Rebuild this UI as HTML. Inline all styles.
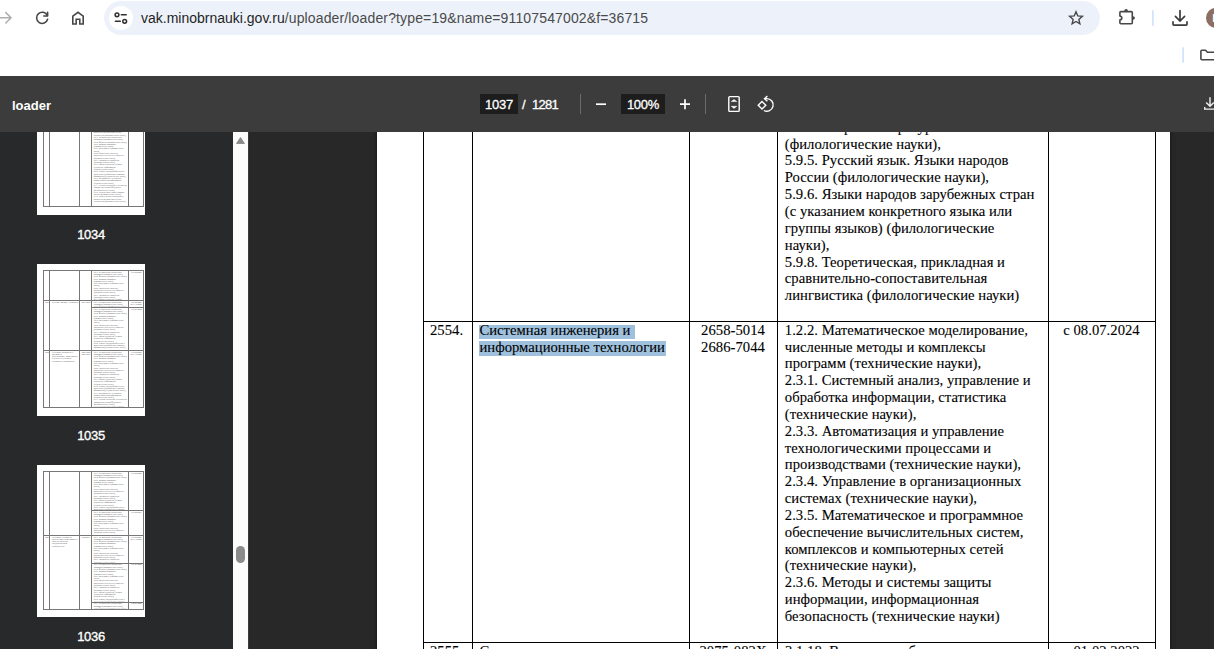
<!DOCTYPE html>
<html lang="ru">
<head>
<meta charset="utf-8">
<title>loader</title>
<style>
*{box-sizing:border-box;margin:0;padding:0}
html,body{width:1214px;height:649px;overflow:hidden;background:#fff}
body{position:relative;font-family:"Liberation Sans",sans-serif}
#chrome{position:absolute;left:0;top:0;width:1214px;height:76px;background:#fff;overflow:hidden}
#omni{position:absolute;left:104px;top:1px;width:996px;height:34px;border-radius:17px;background:#edf2fa}
#chip{position:absolute;left:5px;top:5px;width:24px;height:24px;border-radius:12px;background:#fff}
#url{position:absolute;left:37px;top:0;height:34px;line-height:34px;font-size:14px;color:#4a4a4a;white-space:nowrap;letter-spacing:.14px}
#url b{font-weight:normal;color:#1f1f1f;letter-spacing:0}
.ico{position:absolute;overflow:visible}
#tb{position:absolute;left:0;top:76px;width:1214px;height:56px;background:#3c3c3c;color:#fff}
#title{position:absolute;left:12px;top:1px;line-height:57px;font-size:13px;font-weight:bold}
.box{position:absolute;top:18px;height:20px;background:#1d1d1d;font-size:13px;line-height:22px;text-align:center;color:#fff;letter-spacing:-.25px;-webkit-text-stroke:.3px #fff}
.txt{position:absolute;top:18px;height:20px;font-size:13px;line-height:22px;color:#fff;white-space:nowrap;letter-spacing:-.25px;-webkit-text-stroke:.3px #fff}
.sep{position:absolute;top:18px;width:1px;height:20px;background:#6a6a6a}
#side{position:absolute;left:0;top:132px;width:233px;height:517px;background:#28292a;overflow:hidden}
.th{position:absolute;left:37px;width:108px;height:152px;background:#fff;overflow:hidden}
.th i{position:absolute;background:#777;display:block}
.th u{position:absolute;display:block;text-decoration:none;background:repeating-linear-gradient(180deg,#bdbdbd 0,#bdbdbd 1px,#fff 1px,#fff 2.3px)}
.lbl{position:absolute;left:37px;width:108px;text-align:center;color:#fff;font-size:13px;line-height:16px;letter-spacing:-.3px;-webkit-text-stroke:.35px #fff}
#sb{position:absolute;left:233px;top:132px;width:15px;height:517px;background:#fcfcfc}
#thumb{position:absolute;left:3px;top:414px;width:9px;height:17px;border-radius:4.5px;background:#8b8b8b}
#main{position:absolute;left:248px;top:132px;width:966px;height:517px;background:#282828;overflow:hidden;border-left:1px solid #3a3a3a}
#page{position:absolute;left:128px;top:-300px;width:793px;height:1123px;background:#fff;box-shadow:0 0 4px rgba(0,0,0,.6)}
#layer{position:absolute;left:-249px;top:-132px;width:1214px;height:649px}
#layer .v,#layer .h,#layer .hl{position:absolute}
#layer .v,#layer .h{background:#000}
.t{position:absolute;font-family:"Liberation Serif",serif;font-size:14.667px;line-height:17px;color:#000;white-space:nowrap;-webkit-text-stroke:.1px #000;letter-spacing:.03px}
.hl{background:#9fc1dd}
.pg{position:absolute;left:0;top:0;width:793px;height:1123px;transform:scale(.1362,.1354);transform-origin:0 0;font-family:"Liberation Serif",serif;font-size:14.667px;line-height:16.86px;color:#444}
.pg p{position:absolute;overflow:hidden;padding-left:8px}
</style>
</head>
<body>
<div id="side">
<div class="th" style="top:-69px">
<div class="pg">
<p style="left:408px;width:258px;top:52px;height:1001px;text-align:left">5.2.3. Региональная и отраслевая экономика (экономические науки),<br>5.2.4. Финансы (экономические науки),<br>5.2.5. Мировая экономика (экономические науки),<br>5.2.6. Менеджмент (экономические науки),<br>5.4.4. Социальная структура, социальные институты и процессы (социологические науки),<br>5.4.7. Социология управления (социологические науки),<br>5.8.1. Общая педагогика, история педагогики и образования (педагогические науки),<br>5.8.2. Теория и методика обучения и воспитания (по областям и уровням образования) (педагогические науки),<br>5.8.7. Методология и технология профессионального образования (педагогические науки),<br>5.9.1. Русская литература и литературы народов Российской Федерации (филологические науки),<br>5.9.5. Русский язык. Языки народов России (филологические науки),<br>5.9.8. Теоретическая, прикладная и сравнительно-сопоставительная лингвистика (филологические науки),<br>5.2.3. Региональная и отраслевая экономика (экономические науки),<br>5.2.4. Финансы (экономические науки),<br>5.2.5. Мировая экономика (экономические науки),<br>5.2.6. Менеджмент (экономические науки),<br>5.4.4. Социальная структура, социальные институты и процессы (социологические науки),<br>5.4.7. Социология управления (социологические науки),<br>5.8.1. Общая педагогика, история педагогики и образования (педагогические науки),<br>5.8.2. Теория и методика обучения и воспитания (по областям и уровням образования) (педагогические науки),<br>5.8.7. Методология и технология профессионального образования (педагогические науки),<br>5.9.1. Русская литература и литературы народов Российской Федерации (филологические науки),<br>5.9.5. Русский язык. Языки народов России (филологические науки),<br>5.9.8. Теоретическая, прикладная и сравнительно-сопоставительная лингвистика (филологические науки),<br></p>
</div>
<i style="left:6px;top:6px;width:1px;height:138px"></i>
<i style="left:12px;top:6px;width:1px;height:138px"></i>
<i style="left:42px;top:6px;width:1px;height:138px"></i>
<i style="left:54px;top:6px;width:1px;height:138px"></i>
<i style="left:91px;top:6px;width:1px;height:138px"></i>
<i style="left:106px;top:6px;width:1px;height:138px"></i>
<i style="left:6px;top:6px;width:101px;height:1px"></i>
<i style="left:6px;top:143px;width:101px;height:1px"></i>
</div>
<div class="lbl" style="top:95px">1034</div>
<div class="th" style="top:132px">
<div class="pg">
<p style="left:408px;width:258px;top:52px;height:214px;text-align:left">5.2.3. Региональная и отраслевая экономика (экономические науки),<br>5.2.4. Финансы (экономические науки),<br>5.2.5. Мировая экономика (экономические науки),<br>5.2.6. Менеджмент (экономические науки),<br>5.4.4. Социальная структура, социальные институты и процессы (социологические науки),<br>5.4.7. Социология управления (социологические науки),<br>5.8.1. Общая педагогика, история педагогики и образования (педагогические науки),<br>5.8.2. Теория и методика обучения и воспитания (по областям и уровням образования) (педагогические науки),<br>5.8.7. Методология и технология профессионального образования (педагогические науки),<br>5.9.1. Русская литература и литературы народов Российской Федерации (филологические науки),<br>5.9.5. Русский язык. Языки народов России (филологические науки),<br>5.9.8. Теоретическая, прикладная и сравнительно-сопоставительная лингвистика (филологические науки),<br></p>
<p style="left:671px;width:107px;top:52px;height:37px;text-align:center">с 01.02.2022</p>
<p style="left:52px;width:40px;top:272px;height:37px;text-align:left">2551.</p>
<p style="left:102px;width:205px;top:272px;height:52px;text-align:left">Системы. Методы. Технологии</p>
<p style="left:312px;width:88px;top:272px;height:37px;text-align:center">2077-5415</p>
<p style="left:408px;width:258px;top:272px;height:44px;text-align:left">5.2.3. Региональная и отраслевая экономика (экономические науки),<br>5.2.4. Финансы (экономические науки),<br>5.2.5. Мировая экономика (экономические науки),<br>5.2.6. Менеджмент (экономические науки),<br>5.4.4. Социальная структура, социальные институты и процессы (социологические науки),<br>5.4.7. Социология управления (социологические науки),<br>5.8.1. Общая педагогика, история педагогики и образования (педагогические науки),<br>5.8.2. Теория и методика обучения и воспитания (по областям и уровням образования) (педагогические науки),<br>5.8.7. Методология и технология профессионального образования (педагогические науки),<br>5.9.1. Русская литература и литературы народов Российской Федерации (филологические науки),<br>5.9.5. Русский язык. Языки народов России (филологические науки),<br>5.9.8. Теоретическая, прикладная и сравнительно-сопоставительная лингвистика (филологические науки),<br></p>
<p style="left:671px;width:107px;top:272px;height:44px;text-align:center">с 01.02.2022<br>по 31.12.2023</p>
<p style="left:408px;width:258px;top:324px;height:309px;text-align:left">5.2.3. Региональная и отраслевая экономика (экономические науки),<br>5.2.4. Финансы (экономические науки),<br>5.2.5. Мировая экономика (экономические науки),<br>5.2.6. Менеджмент (экономические науки),<br>5.4.4. Социальная структура, социальные институты и процессы (социологические науки),<br>5.4.7. Социология управления (социологические науки),<br>5.8.1. Общая педагогика, история педагогики и образования (педагогические науки),<br>5.8.2. Теория и методика обучения и воспитания (по областям и уровням образования) (педагогические науки),<br>5.8.7. Методология и технология профессионального образования (педагогические науки),<br>5.9.1. Русская литература и литературы народов Российской Федерации (филологические науки),<br>5.9.5. Русский язык. Языки народов России (филологические науки),<br>5.9.8. Теоретическая, прикладная и сравнительно-сопоставительная лингвистика (филологические науки),<br></p>
<p style="left:671px;width:107px;top:324px;height:29px;text-align:center">с 01.01.2024</p>
<p style="left:52px;width:40px;top:641px;height:37px;text-align:left">2552.</p>
<p style="left:102px;width:205px;top:641px;height:96px;text-align:left">Системная психология и социология<br>до 21.02.2024 г. наименование в Перечне «Системная психология и социология»</p>
<p style="left:312px;width:88px;top:641px;height:44px;text-align:center">2223-6880<br>2223-6872</p>
<p style="left:408px;width:258px;top:641px;height:412px;text-align:left">5.2.3. Региональная и отраслевая экономика (экономические науки),<br>5.2.4. Финансы (экономические науки),<br>5.2.5. Мировая экономика (экономические науки),<br>5.2.6. Менеджмент (экономические науки),<br>5.4.4. Социальная структура, социальные институты и процессы (социологические науки),<br>5.4.7. Социология управления (социологические науки),<br>5.8.1. Общая педагогика, история педагогики и образования (педагогические науки),<br>5.8.2. Теория и методика обучения и воспитания (по областям и уровням образования) (педагогические науки),<br>5.8.7. Методология и технология профессионального образования (педагогические науки),<br>5.9.1. Русская литература и литературы народов Российской Федерации (филологические науки),<br>5.9.5. Русский язык. Языки народов России (филологические науки),<br>5.9.8. Теоретическая, прикладная и сравнительно-сопоставительная лингвистика (филологические науки),<br>5.2.3. Региональная и отраслевая экономика (экономические науки),<br>5.2.4. Финансы (экономические науки),<br>5.2.5. Мировая экономика (экономические науки),<br>5.2.6. Менеджмент (экономические науки),<br>5.4.4. Социальная структура, социальные институты и процессы (социологические науки),<br>5.4.7. Социология управления (социологические науки),<br>5.8.1. Общая педагогика, история педагогики и образования (педагогические науки),<br>5.8.2. Теория и методика обучения и воспитания (по областям и уровням образования) (педагогические науки),<br>5.8.7. Методология и технология профессионального образования (педагогические науки),<br>5.9.1. Русская литература и литературы народов Российской Федерации (филологические науки),<br>5.9.5. Русский язык. Языки народов России (филологические науки),<br>5.9.8. Теоретическая, прикладная и сравнительно-сопоставительная лингвистика (филологические науки),<br></p>
<p style="left:671px;width:107px;top:641px;height:44px;text-align:center">с 01.02.2022<br>по 31.12.2023</p>
</div>
<i style="left:6px;top:6px;width:1px;height:138px"></i>
<i style="left:12px;top:6px;width:1px;height:138px"></i>
<i style="left:42px;top:6px;width:1px;height:138px"></i>
<i style="left:54px;top:6px;width:1px;height:138px"></i>
<i style="left:91px;top:6px;width:1px;height:138px"></i>
<i style="left:106px;top:6px;width:1px;height:138px"></i>
<i style="left:6px;top:6px;width:101px;height:1px"></i>
<i style="left:6px;top:143px;width:101px;height:1px"></i>
<i style="left:6px;top:36px;width:101px;height:1px"></i>
<i style="left:6px;top:86px;width:101px;height:1px"></i>
<i style="left:54px;top:43px;width:53px;height:1px"></i>
</div>
<div class="lbl" style="top:296px">1035</div>
<div class="th" style="top:333px">
<div class="pg">
<p style="left:408px;width:258px;top:52px;height:280px;text-align:left">5.2.3. Региональная и отраслевая экономика (экономические науки),<br>5.2.4. Финансы (экономические науки),<br>5.2.5. Мировая экономика (экономические науки),<br>5.2.6. Менеджмент (экономические науки),<br>5.4.4. Социальная структура, социальные институты и процессы (социологические науки),<br>5.4.7. Социология управления (социологические науки),<br>5.8.1. Общая педагогика, история педагогики и образования (педагогические науки),<br>5.8.2. Теория и методика обучения и воспитания (по областям и уровням образования) (педагогические науки),<br>5.8.7. Методология и технология профессионального образования (педагогические науки),<br>5.9.1. Русская литература и литературы народов Российской Федерации (филологические науки),<br>5.9.5. Русский язык. Языки народов России (филологические науки),<br>5.9.8. Теоретическая, прикладная и сравнительно-сопоставительная лингвистика (филологические науки),<br></p>
<p style="left:671px;width:107px;top:52px;height:22px;text-align:center">с 01.02.2022</p>
<p style="left:408px;width:258px;top:339px;height:177px;text-align:left">5.2.3. Региональная и отраслевая экономика (экономические науки),<br>5.2.4. Финансы (экономические науки),<br>5.2.5. Мировая экономика (экономические науки),<br>5.2.6. Менеджмент (экономические науки),<br>5.4.4. Социальная структура, социальные институты и процессы (социологические науки),<br>5.4.7. Социология управления (социологические науки),<br>5.8.1. Общая педагогика, история педагогики и образования (педагогические науки),<br>5.8.2. Теория и методика обучения и воспитания (по областям и уровням образования) (педагогические науки),<br>5.8.7. Методология и технология профессионального образования (педагогические науки),<br>5.9.1. Русская литература и литературы народов Российской Федерации (филологические науки),<br>5.9.5. Русский язык. Языки народов России (филологические науки),<br>5.9.8. Теоретическая, прикладная и сравнительно-сопоставительная лингвистика (филологические науки),<br></p>
<p style="left:671px;width:107px;top:339px;height:29px;text-align:center">с 21.02.2023</p>
<p style="left:52px;width:40px;top:523px;height:37px;text-align:left">2553.</p>
<p style="left:102px;width:205px;top:523px;height:96px;text-align:left">Системные технологии<br>до 27.03.2023 наименование в Перечне «Вестник государственного университета»</p>
<p style="left:312px;width:88px;top:523px;height:37px;text-align:center">2782-5477</p>
<p style="left:408px;width:258px;top:523px;height:199px;text-align:left">5.2.3. Региональная и отраслевая экономика (экономические науки),<br>5.2.4. Финансы (экономические науки),<br>5.2.5. Мировая экономика (экономические науки),<br>5.2.6. Менеджмент (экономические науки),<br>5.4.4. Социальная структура, социальные институты и процессы (социологические науки),<br>5.4.7. Социология управления (социологические науки),<br>5.8.1. Общая педагогика, история педагогики и образования (педагогические науки),<br>5.8.2. Теория и методика обучения и воспитания (по областям и уровням образования) (педагогические науки),<br>5.8.7. Методология и технология профессионального образования (педагогические науки),<br>5.9.1. Русская литература и литературы народов Российской Федерации (филологические науки),<br>5.9.5. Русский язык. Языки народов России (филологические науки),<br>5.9.8. Теоретическая, прикладная и сравнительно-сопоставительная лингвистика (филологические науки),<br></p>
<p style="left:671px;width:107px;top:523px;height:44px;text-align:center">с 01.02.2022<br>по 31.12.2023</p>
<p style="left:408px;width:258px;top:729px;height:280px;text-align:left">5.2.3. Региональная и отраслевая экономика (экономические науки),<br>5.2.4. Финансы (экономические науки),<br>5.2.5. Мировая экономика (экономические науки),<br>5.2.6. Менеджмент (экономические науки),<br>5.4.4. Социальная структура, социальные институты и процессы (социологические науки),<br>5.4.7. Социология управления (социологические науки),<br>5.8.1. Общая педагогика, история педагогики и образования (педагогические науки),<br>5.8.2. Теория и методика обучения и воспитания (по областям и уровням образования) (педагогические науки),<br>5.8.7. Методология и технология профессионального образования (педагогические науки),<br>5.9.1. Русская литература и литературы народов Российской Федерации (филологические науки),<br>5.9.5. Русский язык. Языки народов России (филологические науки),<br>5.9.8. Теоретическая, прикладная и сравнительно-сопоставительная лингвистика (филологические науки),<br></p>
<p style="left:671px;width:107px;top:729px;height:29px;text-align:center">с 01.01.2024</p>
<p style="left:408px;width:258px;top:1016px;height:44px;text-align:left">5.2.3. Региональная и отраслевая экономика (экономические науки),<br>5.2.4. Финансы (экономические науки),<br>5.2.5. Мировая экономика (экономические науки),<br>5.2.6. Менеджмент (экономические науки),<br>5.4.4. Социальная структура, социальные институты и процессы (социологические науки),<br>5.4.7. Социология управления (социологические науки),<br>5.8.1. Общая педагогика, история педагогики и образования (педагогические науки),<br>5.8.2. Теория и методика обучения и воспитания (по областям и уровням образования) (педагогические науки),<br>5.8.7. Методология и технология профессионального образования (педагогические науки),<br>5.9.1. Русская литература и литературы народов Российской Федерации (филологические науки),<br>5.9.5. Русский язык. Языки народов России (филологические науки),<br>5.9.8. Теоретическая, прикладная и сравнительно-сопоставительная лингвистика (филологические науки),<br></p>
<p style="left:671px;width:107px;top:1016px;height:29px;text-align:center">с 08.07.2024</p>
</div>
<i style="left:6px;top:6px;width:1px;height:139px"></i>
<i style="left:12px;top:6px;width:1px;height:139px"></i>
<i style="left:42px;top:6px;width:1px;height:139px"></i>
<i style="left:54px;top:6px;width:1px;height:139px"></i>
<i style="left:91px;top:6px;width:1px;height:139px"></i>
<i style="left:106px;top:6px;width:1px;height:139px"></i>
<i style="left:6px;top:6px;width:101px;height:1px"></i>
<i style="left:6px;top:144px;width:101px;height:1px"></i>
<i style="left:6px;top:70px;width:101px;height:1px"></i>
<i style="left:54px;top:45px;width:53px;height:1px"></i>
<i style="left:54px;top:98px;width:53px;height:1px"></i>
<i style="left:54px;top:137px;width:53px;height:1px"></i>
</div>
<div class="lbl" style="top:497px">1036</div></div>
<div id="sb"><svg class="ico" style="left:3px;top:5px" width="9" height="7" viewBox="0 0 9 7"><path d="M4.5 0.6 L8.4 6.4 H0.6 Z" fill="#8b8b8b" stroke="#8b8b8b" stroke-width="1" stroke-linejoin="round"/></svg><div id="thumb"></div></div>
<div id="main"><div id="page"></div><div id="layer">
<div class="v" style="left:423px;top:0;width:1px;height:660px"></div>
<div class="v" style="left:472px;top:0;width:1px;height:660px"></div>
<div class="v" style="left:689px;top:0;width:1px;height:660px"></div>
<div class="v" style="left:777px;top:0;width:1px;height:660px"></div>
<div class="v" style="left:1048px;top:0;width:1px;height:660px"></div>
<div class="v" style="left:1155px;top:0;width:1px;height:660px"></div>
<div class="h" style="left:423px;top:321px;width:733px;height:1px"></div>
<div class="h" style="left:423px;top:642px;width:733px;height:1px"></div>
<div class="t " style="left:784.8px;top:119px;">5.9.3. Теория литературы</div>
<div class="t " style="left:784.8px;top:136px;">(филологические науки),</div>
<div class="t " style="left:784.8px;top:152px;">5.9.5. Русский язык. Языки народов</div>
<div class="t " style="left:784.8px;top:169px;">России (филологические науки),</div>
<div class="t " style="left:784.8px;top:186px;">5.9.6. Языки народов зарубежных стран</div>
<div class="t " style="left:784.8px;top:203px;">(с указанием конкретного языка или</div>
<div class="t " style="left:784.8px;top:220px;">группы языков) (филологические</div>
<div class="t " style="left:784.8px;top:237px;">науки),</div>
<div class="t " style="left:784.8px;top:254px;">5.9.8. Теоретическая, прикладная и</div>
<div class="t " style="left:784.8px;top:270px;">сравнительно-сопоставительная</div>
<div class="t " style="left:784.8px;top:287px;">лингвистика (филологические науки)</div>
<div class="t " style="left:784.8px;top:322px;">1.2.2. Математическое моделирование,</div>
<div class="t " style="left:784.8px;top:339px;">численные методы и комплексы</div>
<div class="t " style="left:784.8px;top:355px;">программ (технические науки),</div>
<div class="t " style="left:784.8px;top:372px;">2.3.1. Системный анализ, управление и</div>
<div class="t " style="left:784.8px;top:389px;">обработка информации, статистика</div>
<div class="t " style="left:784.8px;top:406px;">(технические науки),</div>
<div class="t " style="left:784.8px;top:423px;">2.3.3. Автоматизация и управление</div>
<div class="t " style="left:784.8px;top:440px;">технологическими процессами и</div>
<div class="t " style="left:784.8px;top:456px;">производствами (технические науки),</div>
<div class="t " style="left:784.8px;top:473px;">2.3.4. Управление в организационных</div>
<div class="t " style="left:784.8px;top:490px;">системах (технические науки),</div>
<div class="t " style="left:784.8px;top:507px;">2.3.5. Математическое и программное</div>
<div class="t " style="left:784.8px;top:524px;">обеспечение вычислительных систем,</div>
<div class="t " style="left:784.8px;top:541px;">комплексов и компьютерных сетей</div>
<div class="t " style="left:784.8px;top:557px;">(технические науки),</div>
<div class="t " style="left:784.8px;top:574px;">2.3.6. Методы и системы защиты</div>
<div class="t " style="left:784.8px;top:591px;">информации, информационная</div>
<div class="t " style="left:784.8px;top:608px;">безопасность (технические науки)</div>
<div class="t " style="left:430px;top:322px;">2554.</div>
<div class="hl" style="left:479px;top:325px;width:156px;height:14px"></div>
<div class="hl" style="left:479px;top:341px;width:187px;height:15px"></div>
<div class="t " style="left:479.5px;top:322px;letter-spacing:0">Системная инженерия и</div>
<div class="t " style="left:479.5px;top:339px;letter-spacing:0">информационные технологии</div>
<div class="t" style="left:689.0px;width:88px;text-align:center;top:322px">2658-5014</div>
<div class="t" style="left:689.0px;width:88px;text-align:center;top:339px">2686-7044</div>
<div class="t" style="left:1048.0px;width:107px;text-align:center;top:322px">с 08.07.2024</div>
<div class="t " style="left:430px;top:643px;">2555.</div>
<div class="t " style="left:479.5px;top:643px;">Системные гипертензии</div>
<div class="t" style="left:689.0px;width:88px;text-align:center;top:643px">2075-082X</div>
<div class="t " style="left:785px;top:643px;">3.1.18. Внутренние болезни</div>
<div class="t" style="left:1048.0px;width:107px;text-align:center;top:643px">с 01.02.2022</div>
</div></div>
<div id="tb">
<div id="title">loader</div>
<div class="box" style="left:480px;width:38px">1037</div>
<div class="txt" style="left:522px">/</div><div class="txt" style="left:532px;letter-spacing:-.7px">1281</div>
<div class="sep" style="left:580px"></div>
<svg class="ico" style="left:590px;top:18px" width="200" height="20" viewBox="0 0 200 20" fill="none" stroke="#fff" stroke-width="1.7">
<path d="M6 10.2H16"/>
<path d="M90 10.2H100M95 5.2V15.2"/>
<g stroke-width="1.4" stroke-linejoin="round"><rect x="138.8" y="2.6" width="10.4" height="14.8" rx="1"/><path d="M141.2 7.6L144 5.5L146.8 7.6ZM141.2 12.3L144 14.4L146.8 12.3Z" stroke-width=".5" fill="#fff"/></g>
<g stroke-width="1.4"><path d="M174.6 4.65H176.8A6.3 6.3 0 1 1 173.9 16.5"/><path d="M177.4 2.1L174.5 4.7L177.4 7.3"/><path d="M172 7.5L175.8 11.3L172 15.1L168.2 11.3Z" stroke-linejoin="miter"/></g>
</svg>
<div class="box" style="left:621px;width:44px">100%</div>
<div class="sep" style="left:705px"></div>
<svg class="ico" style="left:1200px;top:18px" width="14" height="20" viewBox="0 0 14 20" fill="none" stroke="#f1f1f1" stroke-width="1.4"><path d="M10 3.2V12M6.2 8.5L10 12.3L13.8 8.5M4.7 12.9V15.1H14.5"/></svg>
</div>
<div id="chrome">
<svg class="ico" style="left:0;top:0" width="100" height="36" viewBox="0 0 100 36" fill="none" stroke-linecap="round" stroke-linejoin="round">
<g stroke="#adadad" stroke-width="1.5"><path d="M-2 17.8H10.8M5.8 12.6L11.1 17.8L5.8 23"/></g>
<g stroke="#474747" stroke-width="1.6"><path d="M47.3 15.5A5.6 5.6 0 1 0 47.6 19.3"/><path d="M47.6 12.2V16H43.8"/></g>
<g stroke="#474747" stroke-width="1.6" stroke-linejoin="miter"><path d="M72.8 24V16.2L78 12.3L83.2 16.2V24H79.8V19.2H76.2V24Z"/></g>
</svg>
<div id="omni"><div id="chip"></div>
<svg class="ico" style="left:9px;top:9px" width="16" height="16" viewBox="0 0 16 16" fill="none" stroke="#303030" stroke-width="1.5" stroke-linecap="round"><circle cx="4" cy="4.8" r="1.9"/><path d="M8.3 4.8H13.2"/><circle cx="11.7" cy="11.3" r="1.9"/><path d="M2.4 11.3H7.3"/></svg>
<div id="url"><b>vak.minobrnauki.gov.ru</b>/uploader/loader?type=19&amp;name=91107547002&amp;f=36715</div>
<svg class="ico" style="left:964px;top:9px" width="16" height="16" viewBox="0 0 16 16" fill="none" stroke="#474747" stroke-width="1.4" stroke-linejoin="miter"><path d="M8.00 1.69L9.80 5.96L14.36 6.35L10.85 9.38L11.89 13.85L8.00 11.47L4.11 13.85L5.15 9.38L1.63 6.35L6.20 5.96Z"/></svg>
</div>
<svg class="ico" style="left:1110px;top:0" width="104" height="76" viewBox="0 0 104 76" fill="none" stroke-linecap="round" stroke-linejoin="round">
<g stroke="#474747" stroke-width="1.6"><path d="M10.9 11.6H21.3Q22.3 11.6 22.3 12.6V22.8Q22.3 23.8 21.3 23.8H10.9Q9.9 23.8 9.9 22.8V19.9A1.9 1.9 0 0 0 9.9 16.1V12.6Q9.9 11.6 10.9 11.6Z"/><path d="M14.3 11A1.8 1.9 0 0 1 17.9 11Z M23 16.2A1.9 1.8 0 0 1 23 19.8Z" fill="#474747" stroke="none"/></g>
<rect x="42" y="10" width="1.8" height="16" rx=".9" fill="#d3e3fd" stroke="none"/>
<g stroke="#3c3c3c" stroke-width="1.7"><path d="M70 10.6V20.4M65.4 16.4L70 21L74.6 16.4" stroke-linejoin="miter"/><path d="M63 21.8V24.2Q63 25.1 63.9 25.1H76.1Q77 25.1 77 24.2V21.8"/></g>
<circle cx="106" cy="17.9" r="10" fill="#8d6e63" stroke="none"/>
<text x="102.2" y="22" font-family="Liberation Sans,sans-serif" font-size="11" font-weight="bold" fill="#fff" stroke="none">D</text>
<rect x="72.2" y="47" width="1.8" height="16" rx=".9" fill="#d3e3fd" stroke="none"/>
<g stroke="#474747" stroke-width="1.6"><path d="M91.9 50.2H95.6L97.4 52.2H110V59.8H91.9Q90.9 59.8 90.9 58.8V51.2Q90.9 50.2 91.9 50.2Z"/></g>
</svg>
</div>
</body>
</html>
